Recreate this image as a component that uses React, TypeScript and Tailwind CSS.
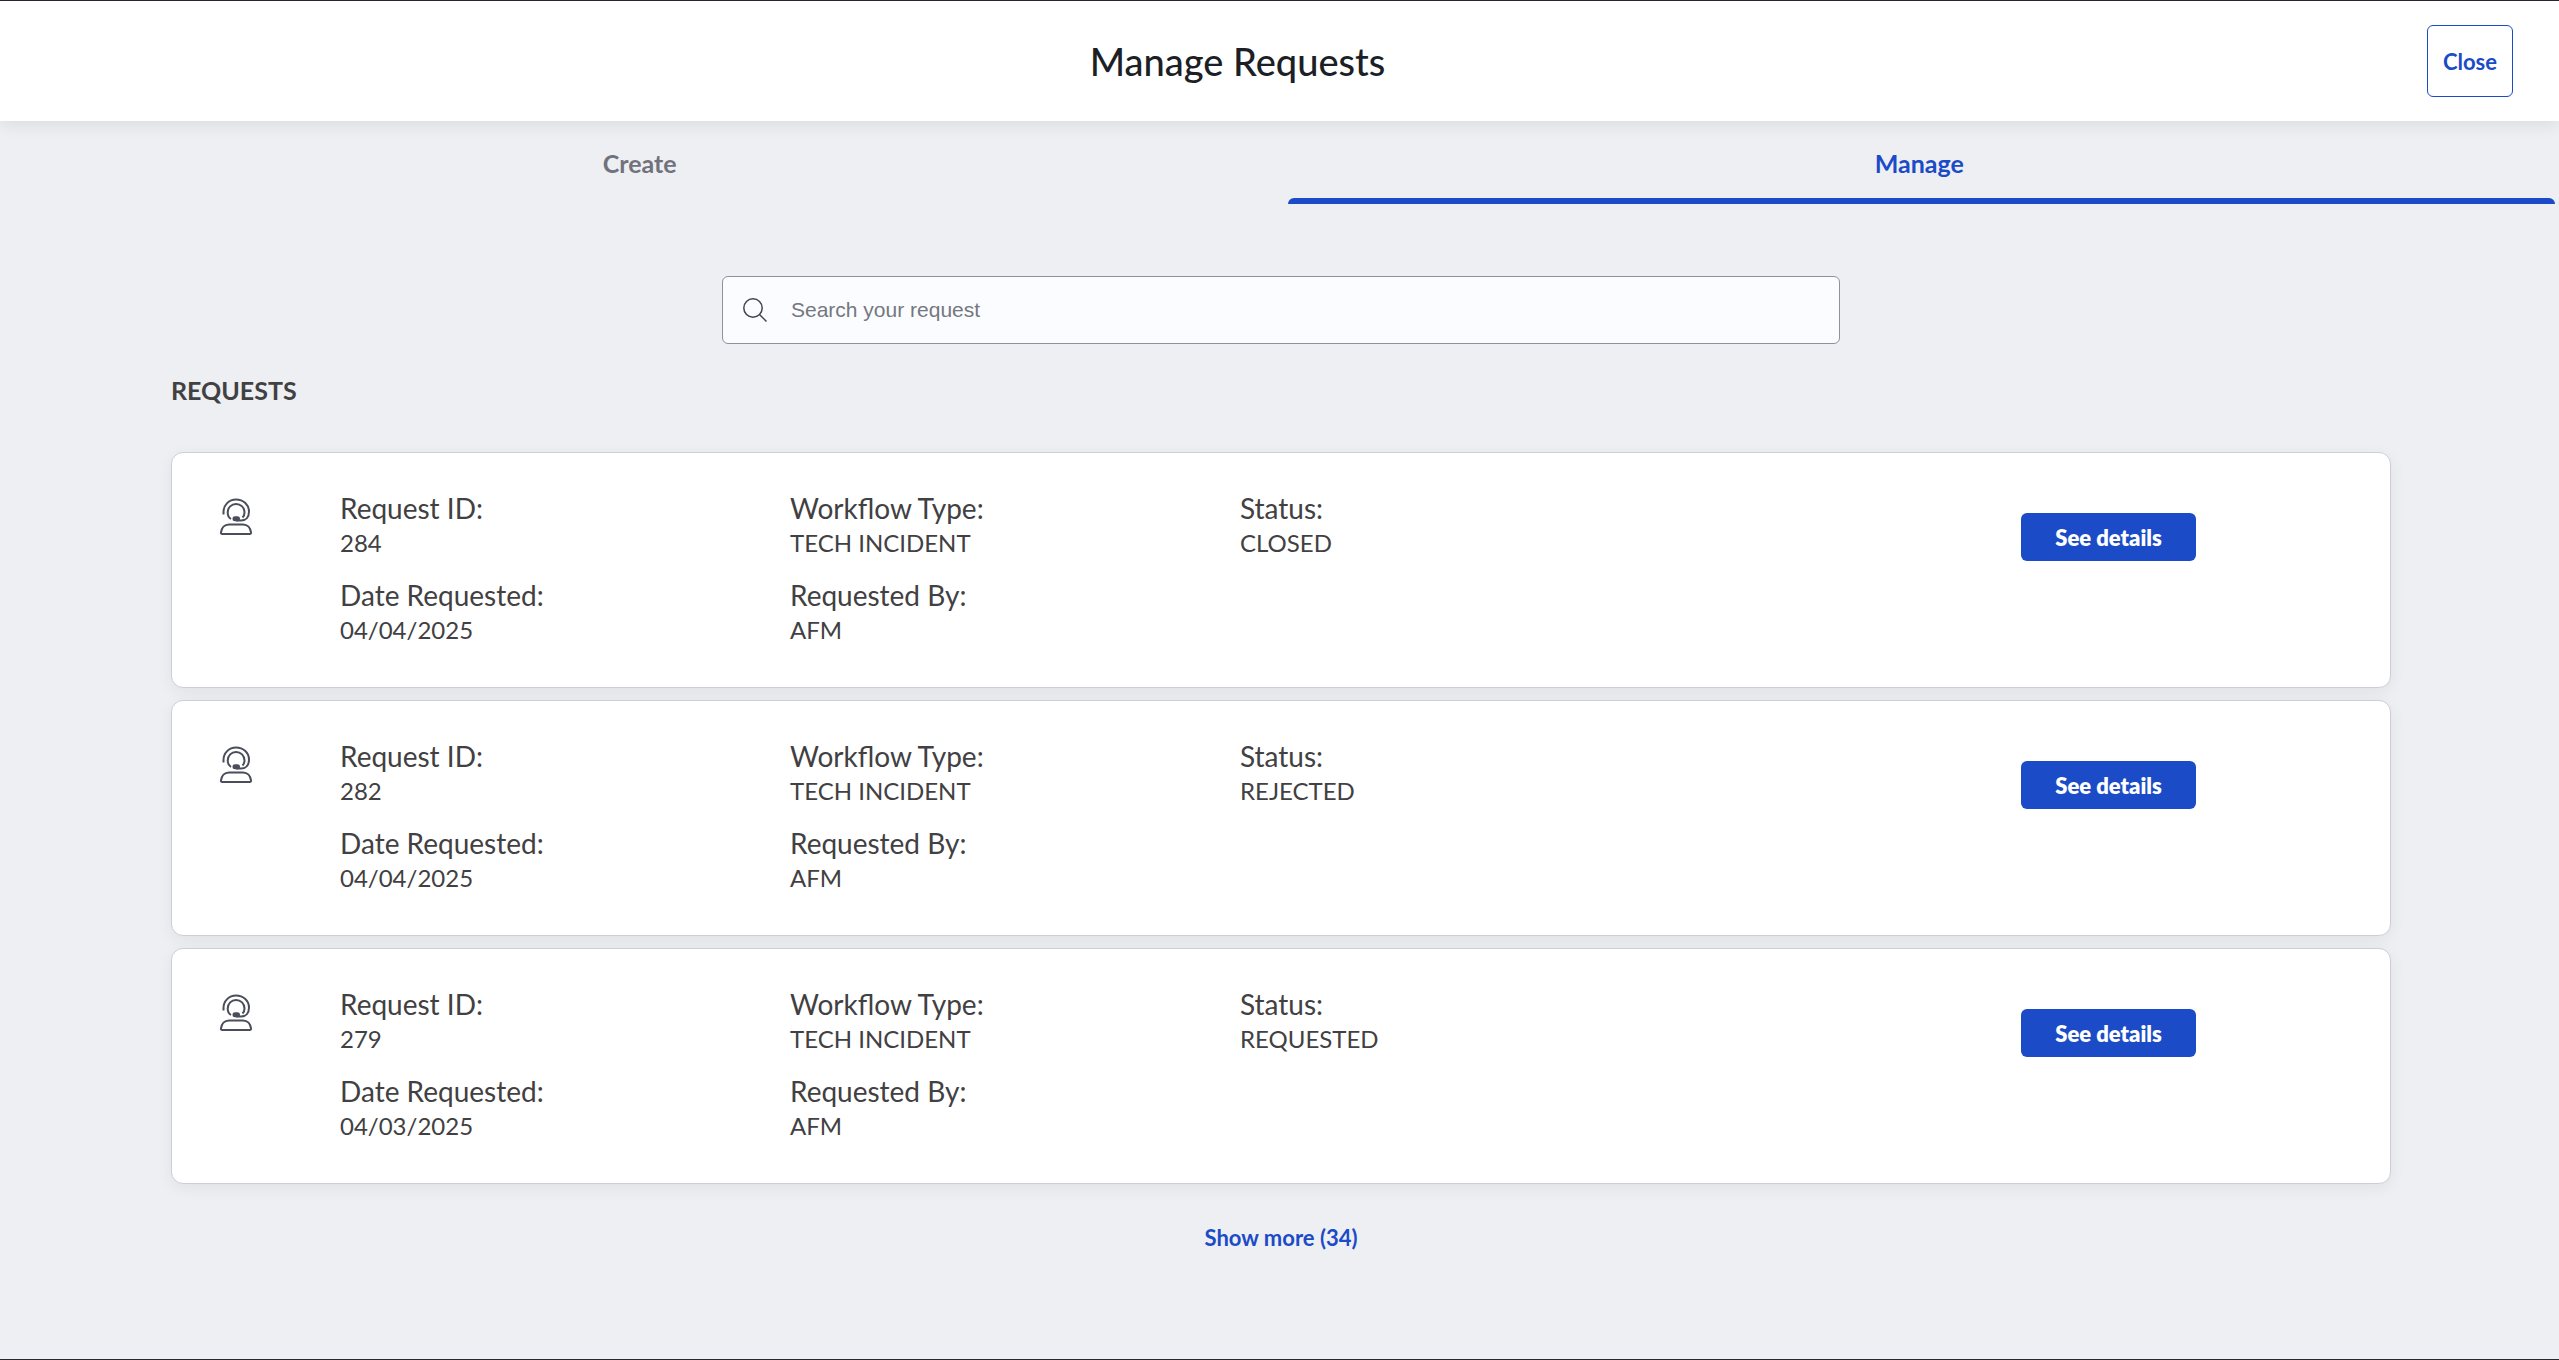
import { useState } from "react";

const requests = [
  { id: "284", date: "04/04/2025", type: "TECH INCIDENT", by: "AFM", status: "CLOSED" },
  { id: "282", date: "04/04/2025", type: "TECH INCIDENT", by: "AFM", status: "REJECTED" },
  { id: "279", date: "04/03/2025", type: "TECH INCIDENT", by: "AFM", status: "REQUESTED" },
];

const tabs = ["Create", "Manage"];

const SearchIcon = () => (
  <svg className="h-6 w-6 shrink-0 text-[#41454f]" viewBox="0 0 24 24" fill="none" stroke="currentColor" strokeWidth="1.5">
    <circle cx="10" cy="10" r="9.2" />
    <path d="M16.5 16.5L23.5 23.5" />
  </svg>
);

const AgentIcon = () => (
  <svg className="h-10 w-8 text-[#4a4d5a]" viewBox="0 0 32 40" fill="none" stroke="currentColor" strokeWidth="2">
    <path d="M3.500 17.500V15C3.500 8 9 2.500 16 2.500C23.500 2.500 29 8 29 14.500C29 20 26 23.500 21 23.500H16" />
    <path d="M11 22C8.500 20.500 7.700 18 7.700 15.500C7.700 10.500 11.500 7 16 7C20.800 7 24.500 10.500 24.500 15.500C24.500 17.500 24 19 22.500 20.500" />
    <rect x="13.500" y="20.300" width="5.500" height="3" rx="1.500" fill="currentColor" />
    <path d="M9 27.500H23C27.500 27.500 30.500 31 31 35.500C31.100 36.600 30.700 37 29.800 37H2.200C1.300 37 0.900 36.600 1 35.500C1.500 31 4.500 27.500 9 27.500Z" />
  </svg>
);

const Field = ({ label, value }: { label: string; value: string }) => (
  <div className="mb-[18px]">
    <dt className="text-[28px] leading-9">{label}</dt>
    <dd className="text-2xl leading-[33px]">{value}</dd>
  </div>
);

export default function ManageRequests() {
  const [tab, setTab] = useState("Manage");
  const [query, setQuery] = useState("");

  return (
    <div className="flex min-h-screen flex-col border-y border-[#262633] bg-[#eeeff3] font-['Lato',sans-serif] text-[#414042]">
      {/* Header */}
      <header className="flex h-30 items-center bg-white pr-[46px] pl-12 shadow-[0_4px_16px_rgba(0,0,0,0.08)]">
        <h1 className="flex-1 text-center text-[38px] font-medium text-[#1c1f26]">Manage Requests</h1>
        <button
          type="button"
          className="h-[72px] w-[86px] rounded-md border border-[#1b4bc6] text-[22px] font-bold text-[#1b4bc6]"
        >
          Close
        </button>
      </header>

      {/* Tabs */}
      <nav className="grid grid-cols-2">
        {tabs.map((name) => (
          <button
            key={name}
            type="button"
            onClick={() => setTab(name)}
            className={
              name === tab
                ? "flex flex-col items-center text-[25px] font-bold text-[#1b4bc6]"
                : "flex flex-col items-center text-[25px] font-bold text-[#70727c]"
            }
          >
            <span className="flex h-[77px] items-center pt-2">{name}</span>
            <span className="block w-full pr-1 pl-2">
              <span className={name === tab ? "block h-1.5 rounded-t-md bg-[#1b4bc6]" : "block h-1.5"} />
            </span>
          </button>
        ))}
      </nav>

      <main className="flex flex-col pt-[72px] pr-[168px] pl-[171px]">
        {/* Search */}
        <label className="mx-auto flex h-[68px] w-full max-w-[1118px] items-center gap-6 rounded-md border border-[#8f919d] bg-[#fbfcff] px-5">
          <SearchIcon />
          <input
            type="text"
            aria-label="Search your request"
            value={query}
            onChange={(e) => setQuery(e.target.value)}
            placeholder="Search your request"
            className="flex-1 bg-transparent font-['Liberation_Sans',Arial,sans-serif] text-[21px] outline-none placeholder:text-[#757780]"
          />
        </label>

        <h2 className="mt-7 text-[25px] leading-9 font-bold">REQUESTS</h2>

        {/* Request cards */}
        <ul className="mt-[44px] flex flex-col gap-3">
          {requests.map((request) => (
            <li
              key={request.id}
              className="grid h-[236px] grid-cols-[168fr_450fr_450fr_781fr_369fr] rounded-xl border border-[#cdced8] bg-white pt-[37px] shadow-[0_4px_16px_rgba(0,0,0,0.06)]"
            >
              <div className="pt-[7px] pl-12">
                <AgentIcon />
              </div>
              <dl>
                <Field label="Request ID:" value={request.id} />
                <Field label="Date Requested:" value={request.date} />
              </dl>
              <dl>
                <Field label="Workflow Type:" value={request.type} />
                <Field label="Requested By:" value={request.by} />
              </dl>
              <dl>
                <Field label="Status:" value={request.status} />
              </dl>
              <div className="pt-[23px]">
                <button type="button" className="h-12 w-[175px] rounded-md bg-[#1b4bc6] text-[22px] font-extrabold text-white">
                  See details
                </button>
              </div>
            </li>
          ))}
        </ul>

        <button type="button" className="mx-auto mt-9 text-[22px] leading-9 font-bold text-[#1b4bc6]">
          Show more (34)
        </button>
      </main>
    </div>
  );
}
